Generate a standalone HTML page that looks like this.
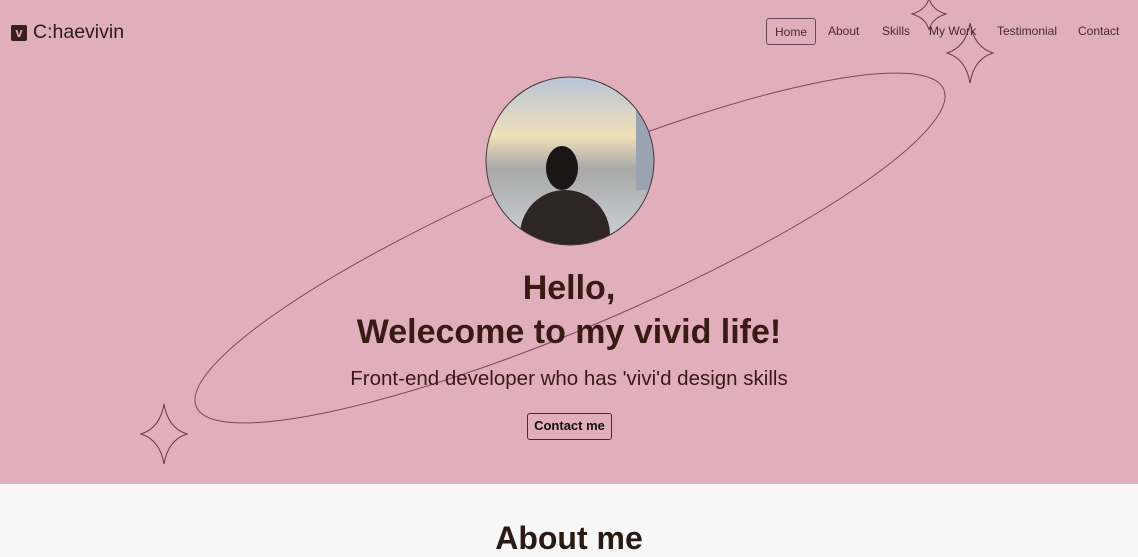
<!DOCTYPE html>
<html><head><meta charset="utf-8"><style>
*{margin:0;padding:0;box-sizing:border-box}
body{width:1138px;height:538px;overflow:hidden;font-family:"Liberation Sans",sans-serif;background:#f7f7f8}
.hero{position:absolute;left:0;top:0;width:1138px;height:484px;background:#e1afbb}
.logo{position:absolute;left:11px;top:21px;font-size:19.5px;color:#2e1a18;display:flex;align-items:center}
.logo i{display:inline-block;width:16px;height:16px;background:#3a1e1a;border-radius:2px;color:#e1afbb;font-style:normal;font-weight:bold;font-size:13px;text-align:center;line-height:16px;margin-right:6px}
nav{position:absolute;top:18px;left:766px;font-size:12px;color:#4a2a2a}
nav span{position:absolute;top:0;height:27px;line-height:27px;white-space:nowrap}
.home{border:1px solid #6a4a5a;border-radius:3px;padding:0 8px;left:0}
h1{position:absolute;top:266px;width:1138px;text-align:center;font-size:34px;line-height:44px;color:#3a1a14;font-weight:bold}
.sub{position:absolute;top:367px;width:1138px;text-align:center;font-size:20.5px;color:#3a1a14}
.btn{position:absolute;left:527px;top:413px;width:85px;height:27px;border:1.5px solid #4a2a2a;border-radius:3px;font-size:13px;font-weight:bold;text-align:center;line-height:24px;color:#111}
.about{position:absolute;top:520px;width:1138px;text-align:center;font-size:32px;font-weight:bold;color:#2a1a14}
svg{position:absolute;left:0;top:0}
</style></head><body>
<div class="hero"></div>
<div class="about">About me</div>
<svg width="1138" height="484">
<defs><clipPath id="c"><circle cx="570" cy="161" r="84"/></clipPath>
<linearGradient id="g" x1="0" y1="0" x2="0" y2="1"><stop offset="0" stop-color="#b8c4d8"/><stop offset=".35" stop-color="#f0e0b8"/><stop offset=".55" stop-color="#a8a8a8"/><stop offset="1" stop-color="#cfd4da"/></linearGradient></defs>
<ellipse cx="570" cy="248" rx="406" ry="80" transform="rotate(-23 570 248)" fill="none" stroke="#7a4a5a" stroke-width="1"/>
<g clip-path="url(#c)"><rect x="486" y="77" width="168" height="168" fill="url(#g)"/>
<rect x="636" y="100" width="18" height="90" fill="#9aa4b0"/>
<ellipse cx="565" cy="235" rx="45" ry="45" fill="#2e2624"/>
<ellipse cx="562" cy="168" rx="16" ry="22" fill="#1a1616"/></g>
<circle cx="570" cy="161" r="84" fill="none" stroke="#4a3a3a" stroke-width="1"/>
<g fill="none" stroke="#6a3a4a" stroke-width="1">
<path d="M164 404 Q168 428 187 434 Q168 440 164 464 Q160 440 141 434 Q160 428 164 404Z"/>
<path d="M970 23 Q974 47 993 53 Q974 59 970 83 Q966 59 947 53 Q966 47 970 23Z"/>
<path d="M929 -2 Q932 10 946 14 Q932 18 929 30 Q926 18 912 14 Q926 10 929 -2Z"/>
</g>
</svg>
<div class="logo"><i>v</i>C:haevivin</div>
<nav><span class="home">Home</span><span style="left:62px">About</span><span style="left:116px">Skills</span><span style="left:163px">My Work</span><span style="left:231px">Testimonial</span><span style="left:312px">Contact</span></nav>
<h1>Hello,<br>Welecome to my vivid life!</h1>
<div class="sub">Front-end developer who has 'vivi'd design skills</div>
<div class="btn">Contact me</div>
</body></html>
